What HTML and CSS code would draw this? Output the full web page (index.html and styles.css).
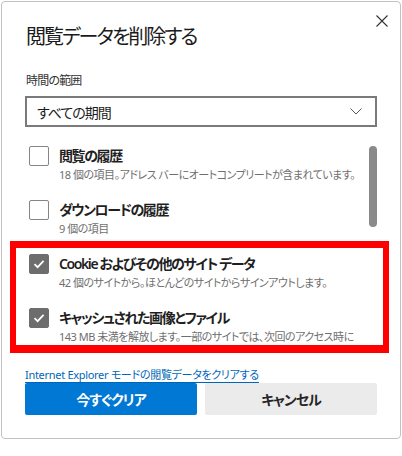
FILE: index.html
```html
<!DOCTYPE html>
<html lang="ja">
  <head>
    <meta charset="UTF-8" />
    <meta name="viewport" content="width=device-width, initial-scale=1.0" />
    <title>閲覧データを削除する</title>
    <link rel="stylesheet" href="styles.css">
  </head>

  <body>
    <div class="dialog">
      <div class="header">
        <h1>閲覧データを削除する</h1>
        <button class="close" aria-label="閉じる">
          <svg width="12" height="12" viewBox="0 0 12 12">
            <path d="M0.5 0.5 L11.5 11.5 M11.5 0.5 L0.5 11.5" stroke="#333" stroke-width="1.1" fill="none" />
          </svg>
        </button>
      </div>

      <p class="range-label">時間の範囲</p>
      <div class="select">
        <span>すべての期間</span>
        <svg width="12" height="7" viewBox="0 0 12 7">
          <path d="M0.5 0.5 L6 6 L11.5 0.5" stroke="#555" stroke-width="1" fill="none" />
        </svg>
      </div>

      <div class="list">
        <div class="items">
          <div class="item">
            <span class="box"></span>
            <div class="text">
              <div class="name">閲覧の履歴</div>
              <div class="desc">18 個の項目。アドレス バーにオートコンプリートが含まれています。</div>
            </div>
          </div>
          <div class="item">
            <span class="box"></span>
            <div class="text">
              <div class="name">ダウンロードの履歴</div>
              <div class="desc">9 個の項目</div>
            </div>
          </div>
          <div class="item">
            <span class="box checked">
              <svg width="18" height="18" viewBox="0 0 18 18">
                <path d="M4.5 9.2 L7.6 12.2 L13.6 5.8" stroke="#fff" stroke-width="1.7" fill="none" />
              </svg>
            </span>
            <div class="text">
              <div class="name">Cookie およびその他のサイト データ</div>
              <div class="desc">42 個のサイトから。ほとんどのサイトからサインアウトします。</div>
            </div>
          </div>
          <div class="item">
            <span class="box checked">
              <svg width="18" height="18" viewBox="0 0 18 18">
                <path d="M4.5 9.2 L7.6 12.2 L13.6 5.8" stroke="#fff" stroke-width="1.7" fill="none" />
              </svg>
            </span>
            <div class="text">
              <div class="name">キャッシュされた画像とファイル</div>
              <div class="desc">143 MB 未満を解放します。一部のサイトでは、次回のアクセス時に読み込みが遅くなる場合があります。</div>
            </div>
          </div>
        </div>
        <div class="thumb"></div>
      </div>

      <a href="#" class="ie-link">Internet Explorer モードの閲覧データをクリアする</a>

      <div class="buttons">
        <button class="btn primary">今すぐクリア</button>
        <button class="btn secondary">キャンセル</button>
      </div>

      <div class="highlight"></div>
    </div>
  </body>
</html>
```

FILE: styles.css
```css
* {
  margin: 0;
  padding: 0;
  box-sizing: border-box;
}

body {
  background-color: white;
  font-family: "Noto Sans", "Noto Sans CJK JP", sans-serif;
  font-feature-settings: "palt" 1;
  color: #1b1b1b;
}

.dialog {
  position: relative;
  margin: 1px 0 0 1px;
  width: 400px;
  height: 438px;
  border: 1px solid #c2c2c2;
  border-radius: 4px;
  padding: 0 23px;
  display: flex;
  flex-direction: column;
}

.header {
  display: flex;
  justify-content: space-between;
  align-items: flex-start;
}

.header h1 {
  margin-top: 21px;
  margin-left: 1px;
  font-size: 20px;
  line-height: 28px;
  font-weight: 400;
  letter-spacing: -2px;
}

.close {
  margin-top: 13px;
  margin-right: -11px;
  width: 12px;
  height: 12px;
  border: none;
  background: none;
  display: flex;
}

.range-label {
  margin-top: 22px;
  margin-left: 1px;
  font-size: 12px;
  line-height: 16px;
  letter-spacing: -0.8px;
  color: #333;
}

.select {
  margin-top: 7px;
  height: 31px;
  border: 2px solid #7a7a7a;
  display: flex;
  align-items: center;
  justify-content: space-between;
  padding: 0 13px 0 10px;
  font-size: 14px;
  letter-spacing: -1px;
  color: #1b1b1b;
}

.list {
  margin-top: 19px;
  height: 199px;
  overflow: hidden;
  display: flex;
}

.items {
  flex: 1;
  display: flex;
  flex-direction: column;
  gap: 17px;
  padding: 0 4px;
}

.item {
  display: flex;
  gap: 10px;
}

.box {
  flex-shrink: 0;
  width: 20px;
  height: 20px;
  border: 1px solid #858585;
  border-radius: 2px;
  display: flex;
  align-items: center;
  justify-content: center;
}

.box.checked {
  background-color: #6d6d6d;
  border-color: #6d6d6d;
}

.text {
  min-width: 0;
}

.name {
  font-size: 14px;
  line-height: 20px;
  font-weight: 600;
  letter-spacing: -1.4px;
  color: #1f1f1f;
}

.desc {
  max-width: 300px;
  font-size: 11px;
  line-height: 17px;
  letter-spacing: -0.5px;
  color: #6f6f6f;
}

.thumb {
  flex-shrink: 0;
  width: 8px;
  height: 81px;
  border-radius: 4px;
  background-color: #8a8a8a;
}

.ie-link {
  margin-top: 22px;
  align-self: flex-start;
  font-size: 11px;
  line-height: 15px;
  letter-spacing: -0.3px;
  color: #0067b8;
  text-decoration: none;
  border-bottom: 1px solid #0067b8;
}

.buttons {
  display: flex;
  gap: 8px;
}

.btn {
  flex: 1;
  height: 32px;
  border: none;
  border-radius: 2px;
  font-family: inherit;
  font-feature-settings: "palt" 1;
  font-size: 14px;
  font-weight: 700;
  letter-spacing: -1px;
}

.primary {
  background-color: #0078d4;
  color: white;
}

.secondary {
  background-color: #ebebeb;
  color: #262626;
}

.highlight {
  position: absolute;
  left: 8px;
  top: 239px;
  width: 379px;
  height: 112px;
  border-style: solid;
  border-color: #ff0000;
  border-width: 7px 6px 8px 6px;
}
```
